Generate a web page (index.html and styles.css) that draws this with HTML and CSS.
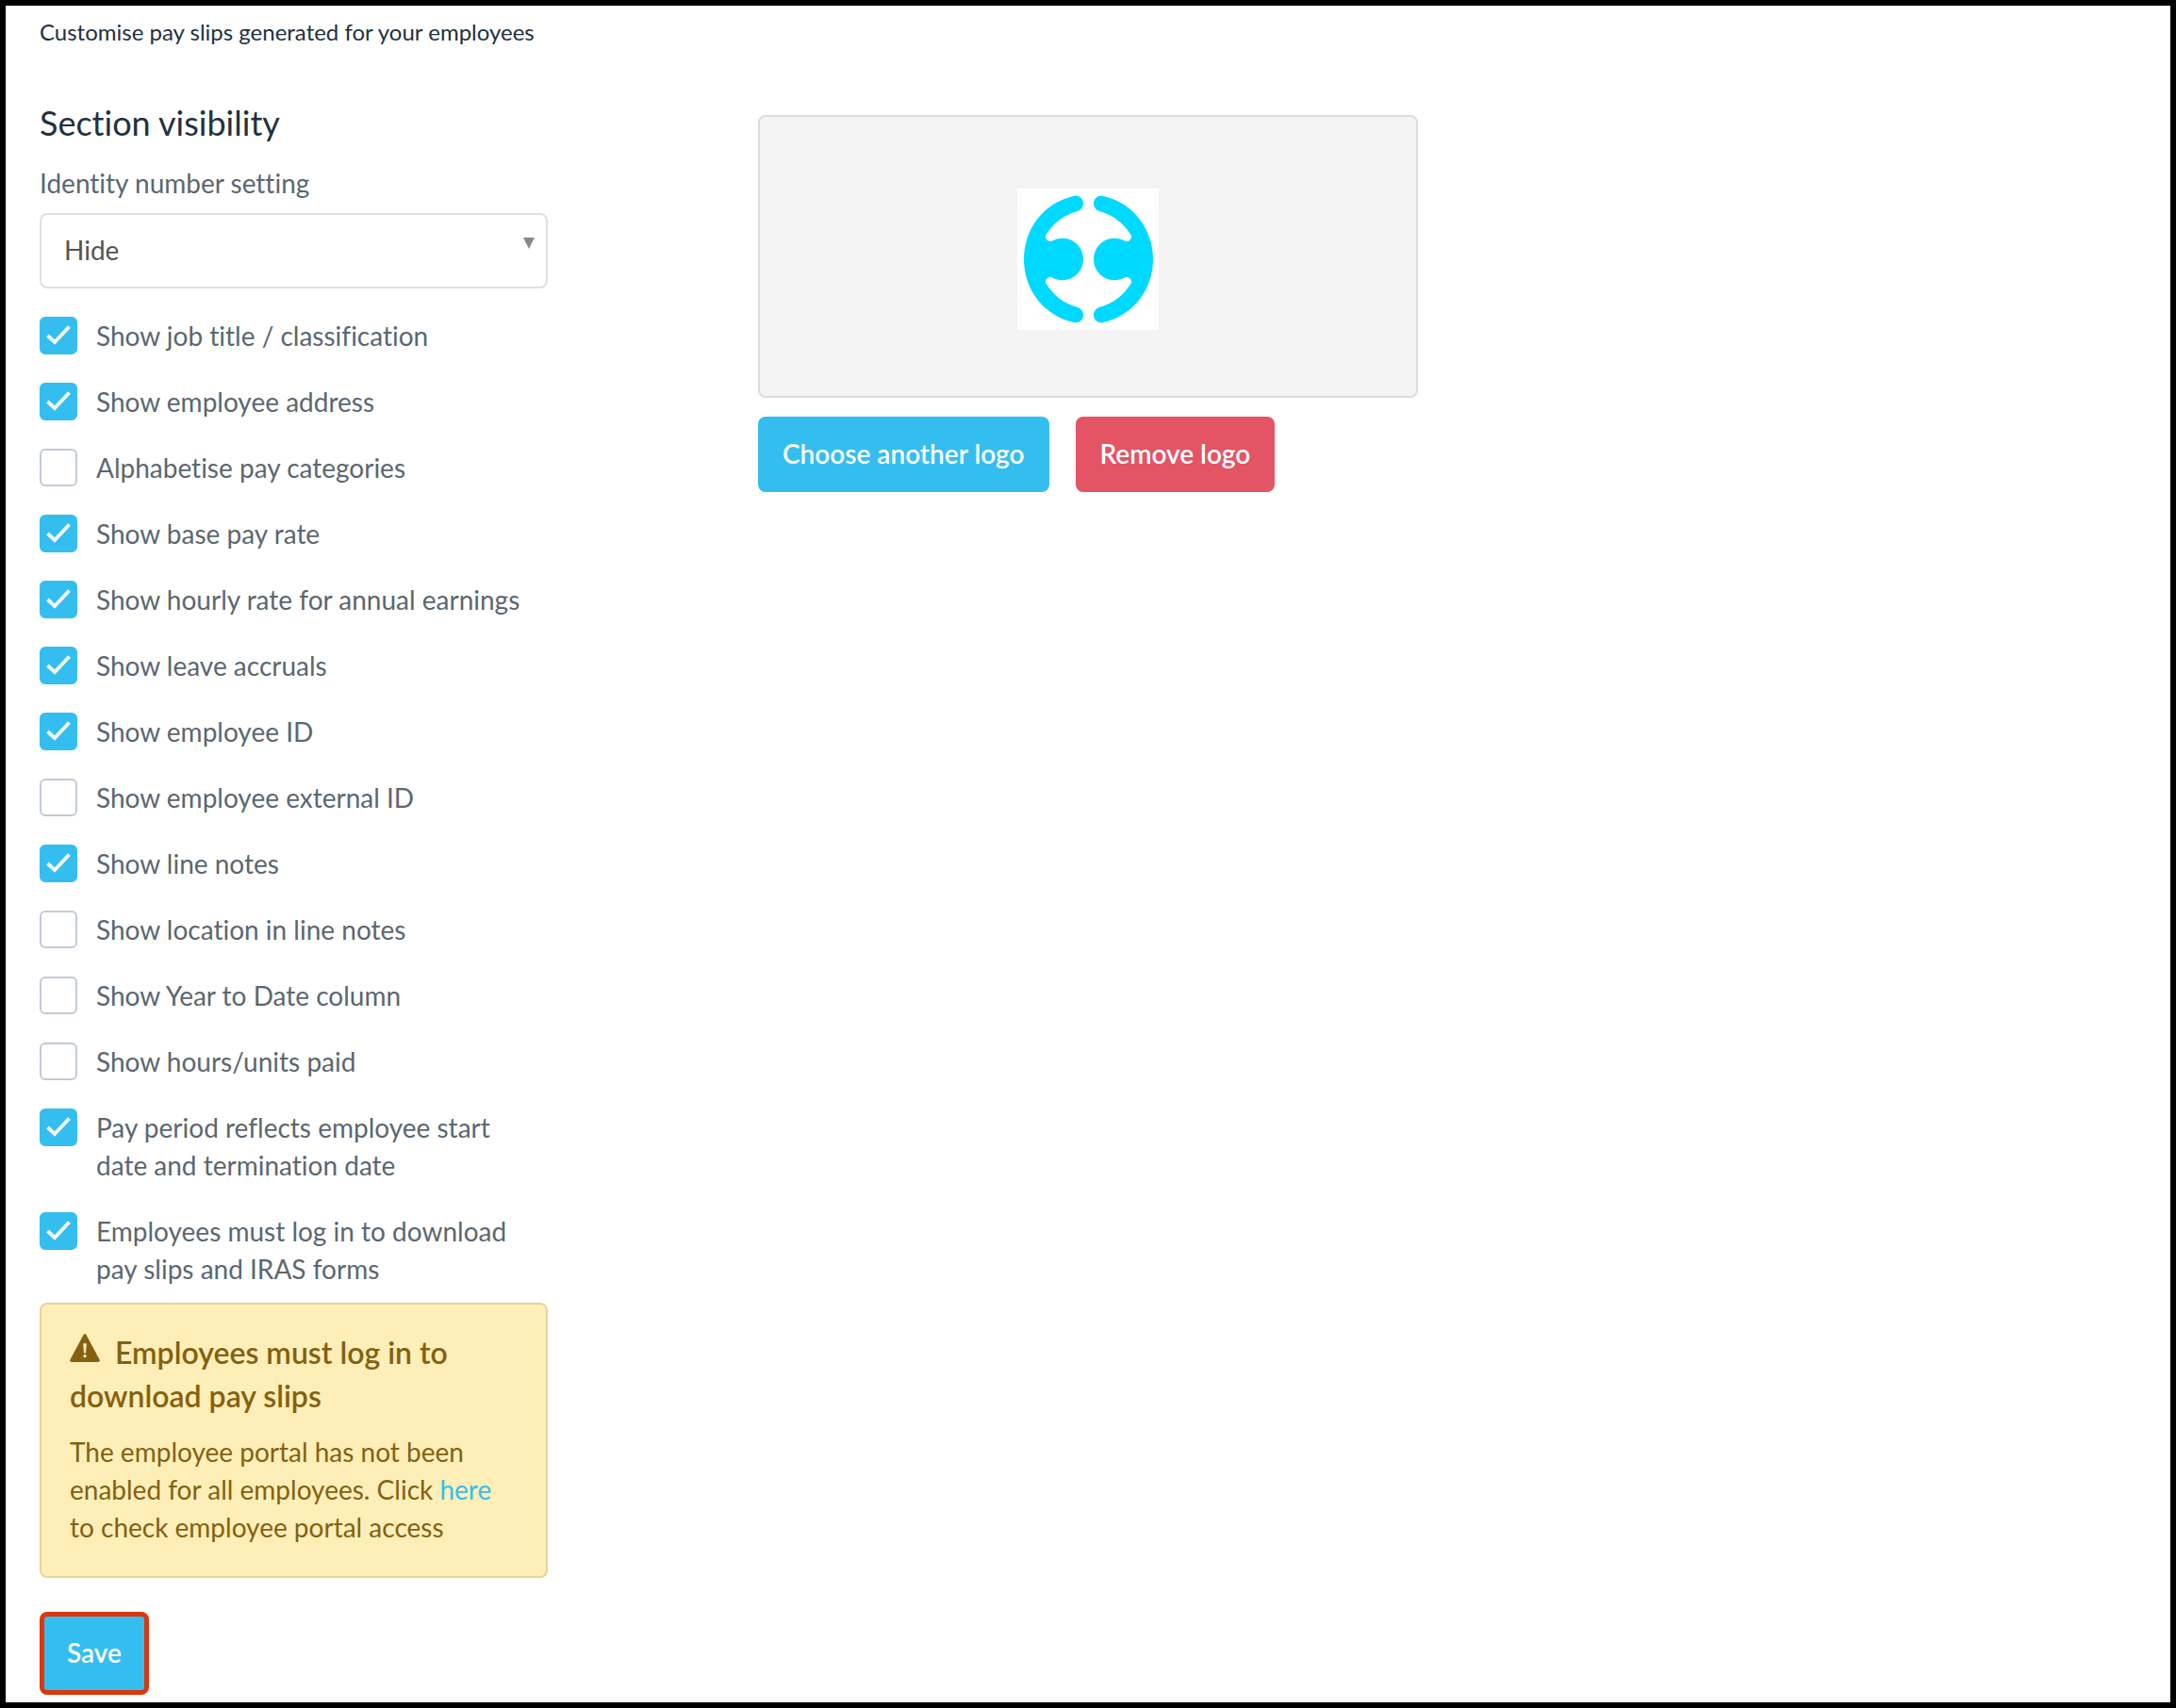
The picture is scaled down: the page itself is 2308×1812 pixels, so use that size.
FILE: index.html
```html
<!DOCTYPE html>
<html lang="en">
<head>
<meta charset="utf-8">
<meta name="viewport" content="width=device-width, initial-scale=1">
<title>Pay slip settings</title>
<link rel="stylesheet" href="styles.css">
</head>
<body>
<main class="page">
  <p class="intro">Customise pay slips generated for your employees</p>
  <div class="columns">
    <form class="settings">
      <h1 class="heading">Section visibility</h1>
      <label class="field-label" for="identity">Identity number setting</label>
      <div class="select-wrap">
        <select class="select" id="identity"><option>Hide</option><option>Show</option></select>
        <svg class="caret" viewBox="0 0 12 12" aria-hidden="true"><path d="M0 0h12L6 12z"/></svg>
      </div>
      <div class="checks">
        <label class="check"><input type="checkbox" checked><span>Show job title / classification</span></label>
        <label class="check"><input type="checkbox" checked><span>Show employee address</span></label>
        <label class="check"><input type="checkbox"><span>Alphabetise pay categories</span></label>
        <label class="check"><input type="checkbox" checked><span>Show base pay rate</span></label>
        <label class="check"><input type="checkbox" checked><span>Show hourly rate for annual earnings</span></label>
        <label class="check"><input type="checkbox" checked><span>Show leave accruals</span></label>
        <label class="check"><input type="checkbox" checked><span>Show employee ID</span></label>
        <label class="check"><input type="checkbox"><span>Show employee external ID</span></label>
        <label class="check"><input type="checkbox" checked><span>Show line notes</span></label>
        <label class="check"><input type="checkbox"><span>Show location in line notes</span></label>
        <label class="check"><input type="checkbox"><span>Show Year to Date column</span></label>
        <label class="check"><input type="checkbox"><span>Show hours/units paid</span></label>
        <label class="check"><input type="checkbox" checked><span>Pay period reflects employee start date and termination date</span></label>
        <label class="check"><input type="checkbox" checked><span>Employees must log in to download pay slips and IRAS forms</span></label>
      </div>
      <div class="alert">
        <h2 class="alert-title"><svg class="alert-icon" viewBox="0 0 32 30" aria-hidden="true"><path class="sign" d="M14.600.9Q16-.9 17.400.9L31.600 27.400Q32.400 30 30 30H2Q-.4 30 .4 27.400z"/><path class="mark" d="M14.200 10.500Q16 9.500 17.800 10.500L17 20.500h-2z"/><circle class="mark" cx="16" cy="23.600" r="1.700"/></svg>Employees must log in to download pay slips</h2>
        <p class="alert-text">The employee portal has not been enabled for all employees. Click <a class="link" href="#portal">here</a> to check employee portal access</p>
      </div>
      <button class="button button-save" type="button">Save</button>
    </form>
    <section class="branding" aria-label="Logo">
      <div class="preview">
        <svg class="logo" viewBox="0 0 150 150" role="img" aria-label="Company logo">
          <rect width="150" height="150" fill="#fff"/>
          <g id="half" fill="#00d9ff">
            <path d="M60 8C28 15 7 43 7 75s21 60 53 67c5 1 10-2 10-8 0-4-3-7-6-8-15-4-26-13-34-26-1-4 4-8 8-5 16 7 32-4 32-20s-16-27-32-20c-4 3-9-1-8-5 8-13 19-22 34-26 3-1 6-4 6-8 0-6-5-9-10-8z"/>
          </g>
          <use href="#half" transform="translate(151 0) scale(-1 1)"/>
        </svg>
      </div>
      <div class="actions">
        <button class="button" type="button">Choose another logo</button>
        <button class="button button-danger" type="button">Remove logo</button>
      </div>
    </section>
  </div>
</main>
</body>
</html>
```
FILE: styles.css
```css
*, *::before, *::after { box-sizing: border-box; }

body {
  margin: 0;
  background: #fff;
  color: #5b6770;
  font-family: Lato, "Liberation Sans", sans-serif;
  font-size: 28px;
  font-variant-ligatures: none;
  line-height: 40px;
}

h1, h2, p { margin: 0; }

.page {
  min-height: 100vh;
  padding: 8px 36px;
  border: 6px solid #000;
}

.intro {
  color: #22313f;
  font-size: 24px;
}

.columns {
  display: grid;
  grid-template-columns: repeat(3, 1fr);
  column-gap: 62px;
  padding-top: 54px;
}

.settings { width: 77%; }

.heading {
  color: #22313f;
  font-size: 36px;
  font-weight: 400;
  line-height: 44px;
}

.field-label {
  display: block;
  margin: 22px 0 12px;
}

.select-wrap {
  position: relative;
}

.select {
  appearance: none;
  display: block;
  width: 100%;
  height: 80px;
  padding: 0 24px 2px;
  border: 2px solid #dce1e6;
  border-radius: 8px;
  background: #fff;
  color: #555;
  font: inherit;
}

.caret {
  position: absolute;
  top: 26px;
  right: 14px;
  width: 12px;
  height: 12px;
  fill: #888;
  pointer-events: none;
}

.checks {
  display: grid;
  row-gap: 30px;
  margin: 30px 0 16px;
}

.check {
  display: flex;
  align-items: flex-start;
  gap: 20px;
  padding-right: 16px;
}

.check input {
  appearance: none;
  flex: none;
  width: 40px;
  height: 40px;
  margin: 0;
  border: 2px solid #c2cad6;
  border-radius: 6px;
  background: #fff;
}

.check input:checked {
  border-color: #34bef0;
  background: #34bef0 url("data:image/svg+xml,%3Csvg xmlns='http://www.w3.org/2000/svg' viewBox='0 0 36 36'%3E%3Cpath d='M6.500 18l7.500 7L29.500 8.500' fill='none' stroke='%23f4f7fa' stroke-width='4'/%3E%3C/svg%3E") center / 36px 36px no-repeat;
}

.alert {
  padding: 28px 30px 32px;
  border: 2px solid #e8d595;
  border-radius: 8px;
  background: #feefb8;
  color: #856010;
}

.alert-title {
  margin-bottom: 16px;
  font-size: 32px;
  font-weight: 600;
  line-height: 46px;
}

.alert-icon {
  width: 32px;
  height: 30px;
  margin-right: 16px;
  vertical-align: 2px;
}

.alert-icon .sign { fill: #856010; }
.alert-icon .mark { fill: #feefb8; }

.link {
  color: #34bef0;
  text-decoration: none;
}

.button {
  height: 80px;
  padding: 0 26px 2px;
  border: 0;
  border-radius: 8px;
  background: #34bef0;
  color: #fff;
  font: inherit;
  font-weight: 600;
}

.button-danger { background: #e35465; }

.button-save {
  display: block;
  height: 88px;
  margin-top: 36px;
  padding: 0 24px 2px;
  border: 5px solid #df350c;
}

.preview {
  display: flex;
  align-items: center;
  justify-content: center;
  height: 300px;
  margin-top: 14px;
  padding-top: 6px;
  border: 2px solid #dcdcdc;
  border-radius: 8px;
  background: #f4f4f4;
}

.logo {
  width: 150px;
  height: 150px;
}

.actions {
  display: flex;
  gap: 28px;
  margin-top: 20px;
}
```
